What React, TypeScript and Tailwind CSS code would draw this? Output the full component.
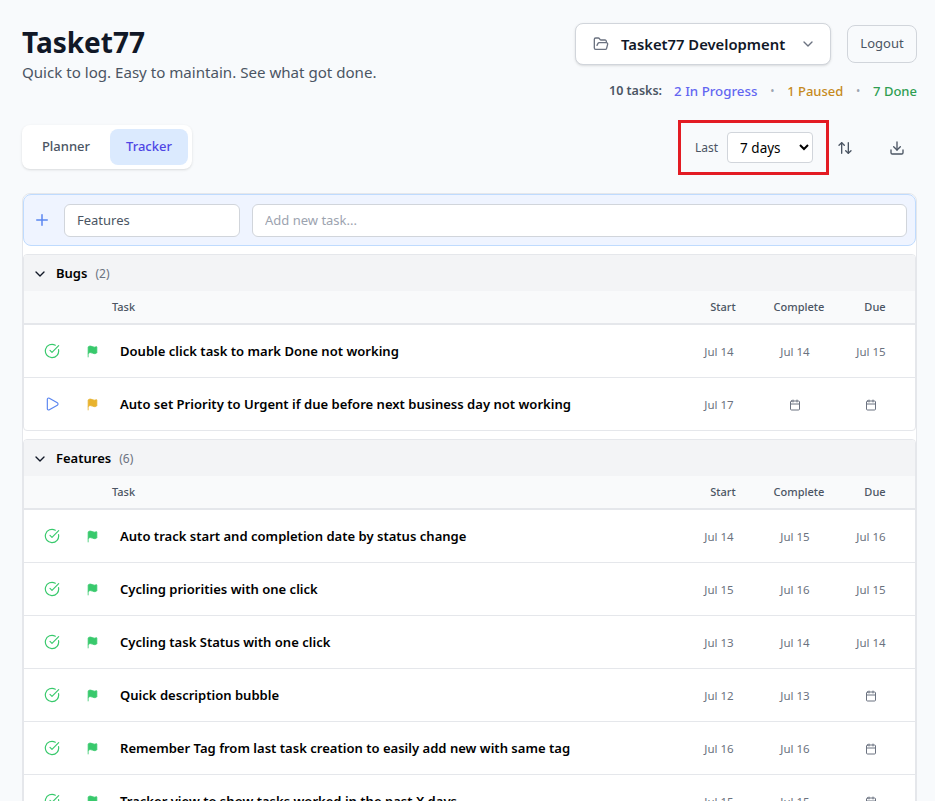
import { ArrowUpDown, Calendar, ChevronDown, CircleCheckBig, Download, Flag, FolderOpen, Play, Plus } from "lucide-react";

type Task = {
    title: string;
    status: "done" | "progress";
    priority: "low" | "medium";
    start: string;
    complete?: string;
    due?: string;
};

const bugs: Task[] = [
    { title: "Double click task to mark Done not working", status: "done", priority: "low", start: "Jul 14", complete: "Jul 14", due: "Jul 15" },
    { title: "Auto set Priority to Urgent if due before next business day not working", status: "progress", priority: "medium", start: "Jul 17" },
];

const features: Task[] = [
    { title: "Auto track start and completion date by status change", status: "done", priority: "low", start: "Jul 14", complete: "Jul 15", due: "Jul 16" },
    { title: "Cycling priorities with one click", status: "done", priority: "low", start: "Jul 15", complete: "Jul 16", due: "Jul 15" },
    { title: "Cycling task Status with one click", status: "done", priority: "low", start: "Jul 13", complete: "Jul 14", due: "Jul 14" },
    { title: "Quick description bubble", status: "done", priority: "low", start: "Jul 12", complete: "Jul 13" },
    { title: "Remember Tag from last task creation to easily add new with same tag", status: "done", priority: "low", start: "Jul 16", complete: "Jul 16" },
    { title: "Tracker view to show tasks worked in the past X days", status: "done", priority: "low", start: "Jul 15", complete: "Jul 15" },
];

function DateCell({ value }: { value?: string }) {
    return (
        <div className="flex w-[76px] justify-center pt-px text-[11.5px] text-[#6b7280]">
            {value ?? <Calendar size={12} className="text-[#6b7280]" />}
        </div>
    );
}

function TaskRow({ task }: { task: Task }) {
    return (
        <div className="flex h-[53px] items-center border-b border-[#e5e7eb] pr-[6px] last:h-[52px] last:border-b-0">
            <div className="flex w-[56px] justify-center">
                {task.status === "done" ? (
                    <CircleCheckBig size={16} strokeWidth={1.75} className="text-[#38c96c]" />
                ) : (
                    <Play size={16} strokeWidth={1.75} className="text-[#5b86f0]" />
                )}
            </div>
            <div className="flex w-[24px] justify-center">
                <Flag
                    size={13}
                    strokeWidth={1.5}
                    className={task.priority === "low" ? "fill-[#38c96c] text-[#38c96c]" : "fill-[#e8b32e] text-[#e8b32e]"}
                />
            </div>
            <div className="min-w-0 flex-1 pl-4 text-[13.05px] leading-5 font-semibold text-black">{task.title}</div>
            <DateCell value={task.start} />
            <DateCell value={task.complete} />
            <DateCell value={task.due} />
        </div>
    );
}

function Section({ name, tasks }: { name: string; tasks: Task[] }) {
    return (
        <section className="overflow-hidden rounded border border-[#e5e7eb] bg-white">
            <div className="flex h-[36px] items-center gap-2 bg-[#f3f4f6] pt-px pl-2">
                <ChevronDown size={16} className="text-[#111827]" />
                <span className="text-[13px] font-semibold text-black">{name}</span>
                <span className="text-xs text-[#6b7280]">({tasks.length})</span>
            </div>
            <div className="flex h-[34px] items-center border-b-2 border-[#e5e7eb] bg-[#f9fafb] pr-[2px] text-[11px] font-medium text-[#4b5563]">
                <div className="flex-1 pl-[88px]">Task</div>
                <div className="w-[76px] text-center">Start</div>
                <div className="w-[76px] text-center">Complete</div>
                <div className="w-[76px] text-center">Due</div>
            </div>
            {tasks.map((task) => (
                <TaskRow key={task.title} task={task} />
            ))}
        </section>
    );
}

export default function App() {
    return (
        <div className="h-[801px] overflow-hidden bg-[#f8fafc] pt-[23px] pr-[18px] pl-[22px] font-['Noto_Sans',sans-serif]">
            <header className="flex justify-between">
                <div>
                    <h1 className="text-[28px] leading-[38px] font-bold text-[#111827]">Tasket77</h1>
                    <p className="text-[15.1px] leading-[22px] text-[#4b5563]">Quick to log. Easy to maintain. See what got done.</p>
                </div>
                <div className="flex flex-col items-end">
                    <div className="flex items-center gap-4">
                        <button className="flex h-[42px] w-[256px] items-center rounded-lg border border-[#d1d5db] bg-white pl-[17px] shadow-sm">
                            <FolderOpen size={16} className="text-[#6b7280]" />
                            <span className="ml-3 text-[14.8px] font-semibold text-[#111827]">Tasket77 Development</span>
                            <ChevronDown size={16} className="ml-[15px] text-[#6b7280]" />
                        </button>
                        <button className="h-[38px] w-[70px] rounded-lg border border-[#d1d5db] text-[13px] text-[#4b5563]">Logout</button>
                    </div>
                    <div className="mt-4 mb-px flex items-center text-[13px] leading-5 font-medium">
                        <span className="text-[12.5px] font-semibold text-[#4b5563]">10 tasks:</span>
                        <span className="ml-3 text-[13.3px] text-[#6366f1]">2 In Progress</span>
                        <span className="mx-[13px] text-[10px] text-[#9ca3af]">•</span>
                        <span className="text-[#c68a1e]">1 Paused</span>
                        <span className="mx-[13px] text-[10px] text-[#9ca3af]">•</span>
                        <span className="text-[#2f9e52]">7 Done</span>
                    </div>
                </div>
            </header>

            <div className="mt-[18px] flex items-start justify-between">
                <nav className="mt-[5px] flex h-[44px] w-[170px] items-center gap-1 rounded-lg bg-white p-1 shadow-sm">
                    <button className="h-9 w-[80px] rounded-lg text-[13px] font-medium text-[#4b5563]">Planner</button>
                    <button className="h-9 w-[78px] rounded-lg bg-[#dbeafe] text-[13px] font-medium text-[#4f46e5]">Tracker</button>
                </nav>
                <div className="mr-1 flex items-center">
                    <div className="flex h-[55px] w-[151px] items-center gap-2 border-[3px] border-[#e31b23] pl-[14px]">
                        <span className="text-xs text-[#4b5563]">Last</span>
                        <select defaultValue="7" className="ml-px h-[31px] w-[86px] rounded border border-[#d1d5db] bg-white pl-2 text-[13.5px] text-black">
                            <option value="7">7 days</option>
                        </select>
                    </div>
                    <div className="flex w-[32px] justify-center">
                        <ArrowUpDown size={16} className="text-[#4b5563]" />
                    </div>
                    <div className="ml-5 flex w-[32px] justify-center">
                        <Download size={16} className="text-[#4b5563]" />
                    </div>
                </div>
            </div>

            <main className="mt-[18px] rounded-lg border border-[#e5e7eb] bg-white">
                <div className="flex h-[52px] items-center gap-3 rounded-lg border-[1.5px] border-[#bfdbfe] bg-[#eff4ff] pr-2 pl-[9px]">
                    <Plus size={18} className="shrink-0 text-[#5b86f0]" />
                    <input readOnly value="Features" className="ml-px h-[33px] w-[176px] rounded-md border border-[#d1d5db] bg-white px-3 text-[13px] text-[#4b5563]" />
                    <input readOnly placeholder="Add new task..." className="h-[33px] flex-1 rounded-md border border-[#d1d5db] bg-white px-3 text-[13px] placeholder:text-[#9ca3af]" />
                </div>
                <div className="mt-2 flex flex-col gap-2">
                    <Section name="Bugs" tasks={bugs} />
                    <Section name="Features" tasks={features} />
                </div>
            </main>
        </div>
    );
}
